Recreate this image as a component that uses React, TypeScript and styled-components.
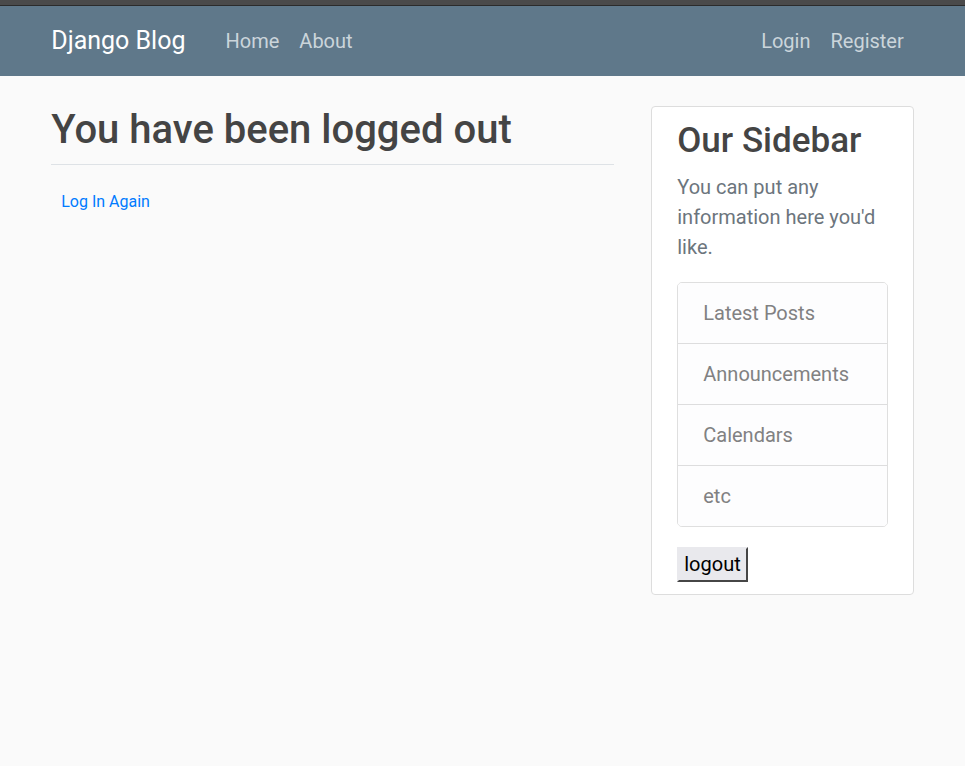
import React from "react";
import styled, { createGlobalStyle } from "styled-components";

const GlobalStyle = createGlobalStyle`
  html, body { margin: 0; padding: 0; }
  body {
    background: #fafafa;
    color: #444444;
    font-family: Roboto, "Liberation Sans", Arial, sans-serif;
    font-size: 20px;
    line-height: 1.5;
  }
  * { box-sizing: border-box; }
`;

const TopStrip = styled.div`
  height: 6px;
  background: #4a4a4a;
  border-bottom: 1px solid #2b2b2b;
`;

const NavBar = styled.header`
  background: #5f788a;
  height: 70px;
  padding: 10px 0;
`;

const Container = styled.div`
  width: 862.5px;
  margin: 0 auto;
  display: flex;
  align-items: center;
`;

const Brand = styled.a`
  color: #ffffff;
  font-size: 25px;
  line-height: 37.5px;
  padding: 6.25px 0;
  margin-right: 30px;
  text-decoration: none;
`;

const NavGroup = styled.nav<{ $right?: boolean }>`
  display: flex;
  margin-left: ${(p) => (p.$right ? "auto" : "0")};
`;

const NavLink = styled.a`
  color: #cbd5db;
  font-size: 20px;
  line-height: 30px;
  padding: 10px;
  text-decoration: none;
`;

const Main = styled.main`
  width: 900px;
  margin: 30px auto 0;
  display: grid;
  grid-template-columns: 600px 300px;
`;

const Column = styled.div`
  padding: 0 18.75px;
`;

const Title = styled.h2`
  font-size: 40px;
  font-weight: 500;
  line-height: 1.2;
  margin: 0 0 10px;
  color: #444444;
`;

const Divider = styled.div`
  border-top: 1px solid #dee2e6;
  padding-top: 20px;
`;

const Small = styled.small`
  font-size: 16px;
  margin-left: 10px;
`;

const TextLink = styled.a`
  color: #007bff;
  text-decoration: none;
`;

const Section = styled.section`
  background: #ffffff;
  border: 1.25px solid #dddddd;
  border-radius: 4px;
  padding: 12.5px 25px;
`;

const SideTitle = styled.h3`
  font-size: 35px;
  font-weight: 500;
  line-height: 1.2;
  margin: 0 0 10px;
  color: #444444;
`;

const Muted = styled.p`
  color: #6c757d;
  margin: 0 0 20px;
`;

const List = styled.ul`
  list-style: none;
  margin: 0 0 20px;
  padding: 0;
  border: 1px solid rgba(0, 0, 0, 0.125);
  border-radius: 5px;
  overflow: hidden;
`;

const Item = styled.li`
  background: #fdfdfe;
  color: #818182;
  padding: 15px 25px;
  line-height: 30px;
  & + & { border-top: 1px solid rgba(0, 0, 0, 0.125); }
`;

const LogoutButton = styled.button`
  font-family: inherit;
  font-size: 20px;
  line-height: 30px;
  color: #000;
  background: #e9e9ed;
  border: 2px outset #9a9a9a;
  border-top-color: #e9e9ed;
  border-left-color: #e9e9ed;
  border-radius: 0;
  padding: 0 5px;
  height: 35px;
  display: block;
`;

export default function App() {
  return (
    <>
      <GlobalStyle />
      <TopStrip />
      <NavBar>
        <Container>
          <Brand href="#">Django Blog</Brand>
          <NavGroup>
            <NavLink href="#">Home</NavLink>
            <NavLink href="#">About</NavLink>
          </NavGroup>
          <NavGroup $right>
            <NavLink href="#">Login</NavLink>
            <NavLink href="#">Register</NavLink>
          </NavGroup>
        </Container>
      </NavBar>
      <Main>
        <Column>
          <Title>You have been logged out</Title>
          <Divider>
            <Small>
              <TextLink href="#">Log In Again</TextLink>
            </Small>
          </Divider>
        </Column>
        <Column>
          <Section>
            <SideTitle>Our Sidebar</SideTitle>
            <Muted>You can put any information here you'd like.</Muted>
            <List>
              <Item>Latest Posts</Item>
              <Item>Announcements</Item>
              <Item>Calendars</Item>
              <Item>etc</Item>
            </List>
            <LogoutButton>logout</LogoutButton>
          </Section>
        </Column>
      </Main>
    </>
  );
}
